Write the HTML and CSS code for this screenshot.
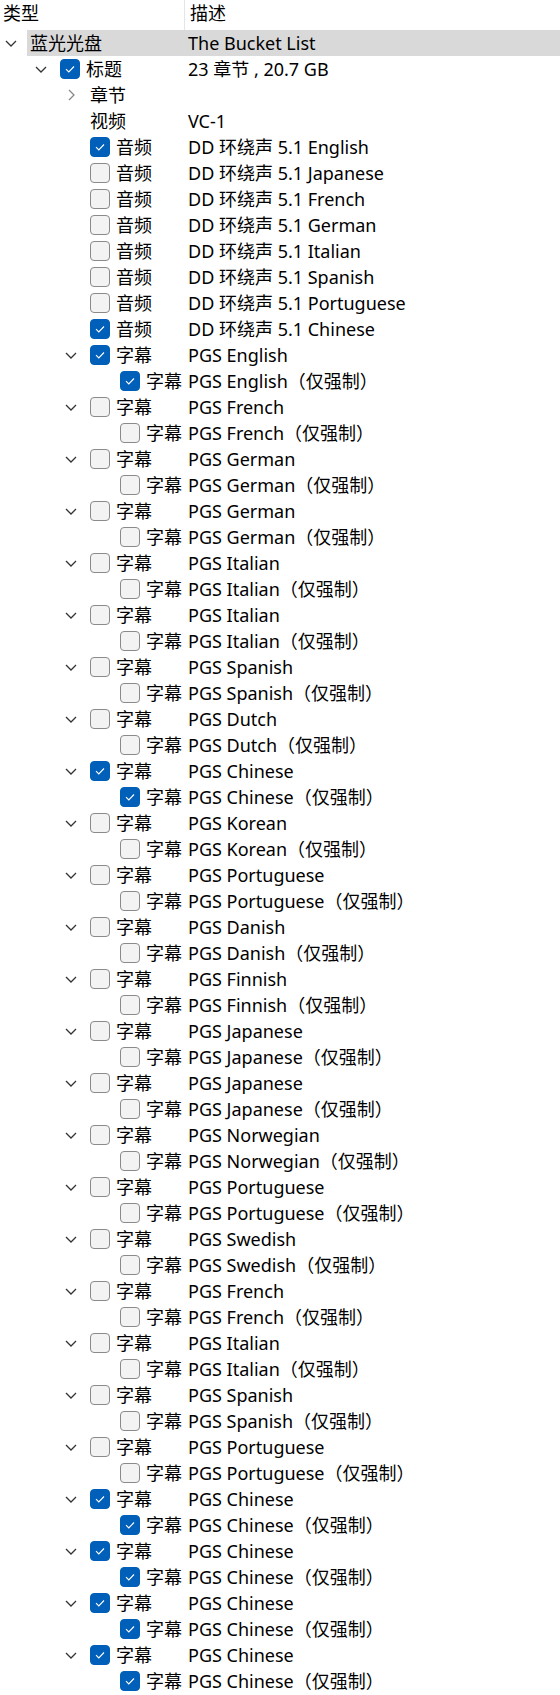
FILE: index.html
```html
<!DOCTYPE html>
<html lang="zh-CN">
<head>
<meta charset="utf-8">
<title>Tree</title>
<link rel="stylesheet" href="styles.css">
</head>
<body>
<div class="tree">
  <div class="head"><div class="hc1">类型</div><div class="hc2">描述</div></div>

  <div class="row sel"><div class="c1 l0"><span class="tw open"></span><span class="name">蓝光光盘</span></div><div class="desc">The Bucket List</div></div>
  <div class="row"><div class="c1 l1"><span class="tw open"></span><span class="cb on"></span><span class="name">标题</span></div><div class="desc">23 章节 , 20.7 GB</div></div>
  <div class="row"><div class="c1 l2"><span class="tw closed"></span><span class="name">章节</span></div><div class="desc"></div></div>
  <div class="row"><div class="c1 l2"><span class="tw"></span><span class="name">视频</span></div><div class="desc">VC-1</div></div>
  <div class="row"><div class="c1 l2"><span class="tw"></span><span class="cb on"></span><span class="name">音频</span></div><div class="desc">DD 环绕声 5.1 English</div></div>
  <div class="row"><div class="c1 l2"><span class="tw"></span><span class="cb"></span><span class="name">音频</span></div><div class="desc">DD 环绕声 5.1 Japanese</div></div>
  <div class="row"><div class="c1 l2"><span class="tw"></span><span class="cb"></span><span class="name">音频</span></div><div class="desc">DD 环绕声 5.1 French</div></div>
  <div class="row"><div class="c1 l2"><span class="tw"></span><span class="cb"></span><span class="name">音频</span></div><div class="desc">DD 环绕声 5.1 German</div></div>
  <div class="row"><div class="c1 l2"><span class="tw"></span><span class="cb"></span><span class="name">音频</span></div><div class="desc">DD 环绕声 5.1 Italian</div></div>
  <div class="row"><div class="c1 l2"><span class="tw"></span><span class="cb"></span><span class="name">音频</span></div><div class="desc">DD 环绕声 5.1 Spanish</div></div>
  <div class="row"><div class="c1 l2"><span class="tw"></span><span class="cb"></span><span class="name">音频</span></div><div class="desc">DD 环绕声 5.1 Portuguese</div></div>
  <div class="row"><div class="c1 l2"><span class="tw"></span><span class="cb on"></span><span class="name">音频</span></div><div class="desc">DD 环绕声 5.1 Chinese</div></div>

  <div class="row"><div class="c1 l2"><span class="tw open"></span><span class="cb on"></span><span class="name">字幕</span></div><div class="desc">PGS English</div></div>
  <div class="row"><div class="c1 l3"><span class="tw"></span><span class="cb on"></span><span class="name">字幕</span></div><div class="desc">PGS English（仅强制）</div></div>
  <div class="row"><div class="c1 l2"><span class="tw open"></span><span class="cb"></span><span class="name">字幕</span></div><div class="desc">PGS French</div></div>
  <div class="row"><div class="c1 l3"><span class="tw"></span><span class="cb"></span><span class="name">字幕</span></div><div class="desc">PGS French（仅强制）</div></div>
  <div class="row"><div class="c1 l2"><span class="tw open"></span><span class="cb"></span><span class="name">字幕</span></div><div class="desc">PGS German</div></div>
  <div class="row"><div class="c1 l3"><span class="tw"></span><span class="cb"></span><span class="name">字幕</span></div><div class="desc">PGS German（仅强制）</div></div>
  <div class="row"><div class="c1 l2"><span class="tw open"></span><span class="cb"></span><span class="name">字幕</span></div><div class="desc">PGS German</div></div>
  <div class="row"><div class="c1 l3"><span class="tw"></span><span class="cb"></span><span class="name">字幕</span></div><div class="desc">PGS German（仅强制）</div></div>
  <div class="row"><div class="c1 l2"><span class="tw open"></span><span class="cb"></span><span class="name">字幕</span></div><div class="desc">PGS Italian</div></div>
  <div class="row"><div class="c1 l3"><span class="tw"></span><span class="cb"></span><span class="name">字幕</span></div><div class="desc">PGS Italian（仅强制）</div></div>
  <div class="row"><div class="c1 l2"><span class="tw open"></span><span class="cb"></span><span class="name">字幕</span></div><div class="desc">PGS Italian</div></div>
  <div class="row"><div class="c1 l3"><span class="tw"></span><span class="cb"></span><span class="name">字幕</span></div><div class="desc">PGS Italian（仅强制）</div></div>
  <div class="row"><div class="c1 l2"><span class="tw open"></span><span class="cb"></span><span class="name">字幕</span></div><div class="desc">PGS Spanish</div></div>
  <div class="row"><div class="c1 l3"><span class="tw"></span><span class="cb"></span><span class="name">字幕</span></div><div class="desc">PGS Spanish（仅强制）</div></div>
  <div class="row"><div class="c1 l2"><span class="tw open"></span><span class="cb"></span><span class="name">字幕</span></div><div class="desc">PGS Dutch</div></div>
  <div class="row"><div class="c1 l3"><span class="tw"></span><span class="cb"></span><span class="name">字幕</span></div><div class="desc">PGS Dutch（仅强制）</div></div>
  <div class="row"><div class="c1 l2"><span class="tw open"></span><span class="cb on"></span><span class="name">字幕</span></div><div class="desc">PGS Chinese</div></div>
  <div class="row"><div class="c1 l3"><span class="tw"></span><span class="cb on"></span><span class="name">字幕</span></div><div class="desc">PGS Chinese（仅强制）</div></div>
  <div class="row"><div class="c1 l2"><span class="tw open"></span><span class="cb"></span><span class="name">字幕</span></div><div class="desc">PGS Korean</div></div>
  <div class="row"><div class="c1 l3"><span class="tw"></span><span class="cb"></span><span class="name">字幕</span></div><div class="desc">PGS Korean（仅强制）</div></div>
  <div class="row"><div class="c1 l2"><span class="tw open"></span><span class="cb"></span><span class="name">字幕</span></div><div class="desc">PGS Portuguese</div></div>
  <div class="row"><div class="c1 l3"><span class="tw"></span><span class="cb"></span><span class="name">字幕</span></div><div class="desc">PGS Portuguese（仅强制）</div></div>
  <div class="row"><div class="c1 l2"><span class="tw open"></span><span class="cb"></span><span class="name">字幕</span></div><div class="desc">PGS Danish</div></div>
  <div class="row"><div class="c1 l3"><span class="tw"></span><span class="cb"></span><span class="name">字幕</span></div><div class="desc">PGS Danish（仅强制）</div></div>
  <div class="row"><div class="c1 l2"><span class="tw open"></span><span class="cb"></span><span class="name">字幕</span></div><div class="desc">PGS Finnish</div></div>
  <div class="row"><div class="c1 l3"><span class="tw"></span><span class="cb"></span><span class="name">字幕</span></div><div class="desc">PGS Finnish（仅强制）</div></div>
  <div class="row"><div class="c1 l2"><span class="tw open"></span><span class="cb"></span><span class="name">字幕</span></div><div class="desc">PGS Japanese</div></div>
  <div class="row"><div class="c1 l3"><span class="tw"></span><span class="cb"></span><span class="name">字幕</span></div><div class="desc">PGS Japanese（仅强制）</div></div>
  <div class="row"><div class="c1 l2"><span class="tw open"></span><span class="cb"></span><span class="name">字幕</span></div><div class="desc">PGS Japanese</div></div>
  <div class="row"><div class="c1 l3"><span class="tw"></span><span class="cb"></span><span class="name">字幕</span></div><div class="desc">PGS Japanese（仅强制）</div></div>
  <div class="row"><div class="c1 l2"><span class="tw open"></span><span class="cb"></span><span class="name">字幕</span></div><div class="desc">PGS Norwegian</div></div>
  <div class="row"><div class="c1 l3"><span class="tw"></span><span class="cb"></span><span class="name">字幕</span></div><div class="desc">PGS Norwegian（仅强制）</div></div>
  <div class="row"><div class="c1 l2"><span class="tw open"></span><span class="cb"></span><span class="name">字幕</span></div><div class="desc">PGS Portuguese</div></div>
  <div class="row"><div class="c1 l3"><span class="tw"></span><span class="cb"></span><span class="name">字幕</span></div><div class="desc">PGS Portuguese（仅强制）</div></div>
  <div class="row"><div class="c1 l2"><span class="tw open"></span><span class="cb"></span><span class="name">字幕</span></div><div class="desc">PGS Swedish</div></div>
  <div class="row"><div class="c1 l3"><span class="tw"></span><span class="cb"></span><span class="name">字幕</span></div><div class="desc">PGS Swedish（仅强制）</div></div>
  <div class="row"><div class="c1 l2"><span class="tw open"></span><span class="cb"></span><span class="name">字幕</span></div><div class="desc">PGS French</div></div>
  <div class="row"><div class="c1 l3"><span class="tw"></span><span class="cb"></span><span class="name">字幕</span></div><div class="desc">PGS French（仅强制）</div></div>
  <div class="row"><div class="c1 l2"><span class="tw open"></span><span class="cb"></span><span class="name">字幕</span></div><div class="desc">PGS Italian</div></div>
  <div class="row"><div class="c1 l3"><span class="tw"></span><span class="cb"></span><span class="name">字幕</span></div><div class="desc">PGS Italian（仅强制）</div></div>
  <div class="row"><div class="c1 l2"><span class="tw open"></span><span class="cb"></span><span class="name">字幕</span></div><div class="desc">PGS Spanish</div></div>
  <div class="row"><div class="c1 l3"><span class="tw"></span><span class="cb"></span><span class="name">字幕</span></div><div class="desc">PGS Spanish（仅强制）</div></div>
  <div class="row"><div class="c1 l2"><span class="tw open"></span><span class="cb"></span><span class="name">字幕</span></div><div class="desc">PGS Portuguese</div></div>
  <div class="row"><div class="c1 l3"><span class="tw"></span><span class="cb"></span><span class="name">字幕</span></div><div class="desc">PGS Portuguese（仅强制）</div></div>
  <div class="row"><div class="c1 l2"><span class="tw open"></span><span class="cb on"></span><span class="name">字幕</span></div><div class="desc">PGS Chinese</div></div>
  <div class="row"><div class="c1 l3"><span class="tw"></span><span class="cb on"></span><span class="name">字幕</span></div><div class="desc">PGS Chinese（仅强制）</div></div>
  <div class="row"><div class="c1 l2"><span class="tw open"></span><span class="cb on"></span><span class="name">字幕</span></div><div class="desc">PGS Chinese</div></div>
  <div class="row"><div class="c1 l3"><span class="tw"></span><span class="cb on"></span><span class="name">字幕</span></div><div class="desc">PGS Chinese（仅强制）</div></div>
  <div class="row"><div class="c1 l2"><span class="tw open"></span><span class="cb on"></span><span class="name">字幕</span></div><div class="desc">PGS Chinese</div></div>
  <div class="row"><div class="c1 l3"><span class="tw"></span><span class="cb on"></span><span class="name">字幕</span></div><div class="desc">PGS Chinese（仅强制）</div></div>
  <div class="row"><div class="c1 l2"><span class="tw open"></span><span class="cb on"></span><span class="name">字幕</span></div><div class="desc">PGS Chinese</div></div>
  <div class="row"><div class="c1 l3"><span class="tw"></span><span class="cb on"></span><span class="name">字幕</span></div><div class="desc">PGS Chinese（仅强制）</div></div>
</div>
</body>
</html>
```
FILE: styles.css
```css
html, body {
  margin: 0;
  padding: 0;
  background: #ffffff;
}
body {
  font-family: "Noto Sans", "Noto Sans CJK SC", sans-serif;
  font-size: 18px;
  color: #000000;
}
.tree {
  width: 560px;
}
.head {
  display: grid;
  grid-template-columns: 184px 1fr;
  height: 30px;
}
.hc1 {
  padding-left: 3px;
  line-height: 26px;
}
.hc2 {
  border-left: 1px solid #e5e5e5;
  padding-left: 5px;
  line-height: 26px;
}
.row {
  display: grid;
  grid-template-columns: 184px 1fr;
  height: 26px;
  line-height: 26px;
  white-space: nowrap;
}
.row.sel {
  background: linear-gradient(to right, transparent 27px, #d9d9d9 27px);
}
.c1 {
  display: flex;
  align-items: center;
  overflow: hidden;
}
.l0 { padding-left: 0; }
.l1 { padding-left: 30px; }
.l2 { padding-left: 60px; }
.l3 { padding-left: 90px; }
.tw {
  flex: 0 0 30px;
  height: 26px;
  background-repeat: no-repeat;
}
.tw.open {
  background-image: url("data:image/svg+xml,%3Csvg xmlns='http://www.w3.org/2000/svg' width='12' height='7' viewBox='0 0 12 7'%3E%3Cpath d='M1 1 L6 6 L11 1' fill='none' stroke='%23333333' stroke-width='1.3'/%3E%3C/svg%3E");
  background-position: 5px 10px;
}
.tw.closed {
  background-image: url("data:image/svg+xml,%3Csvg xmlns='http://www.w3.org/2000/svg' width='7' height='12' viewBox='0 0 7 12'%3E%3Cpath d='M1 1 L6 6 L1 11' fill='none' stroke='%23888888' stroke-width='1.3'/%3E%3C/svg%3E");
  background-position: 8px 7px;
}
.cb {
  flex: 0 0 20px;
  width: 20px;
  height: 20px;
  box-sizing: border-box;
  border-radius: 4px;
  border: 1px solid #8a8a8a;
  background: #f3f3f3;
  margin-right: 6px;
}
.cb.on {
  border-color: #005fb8;
  background-color: #005fb8;
  background-image: url("data:image/svg+xml,%3Csvg xmlns='http://www.w3.org/2000/svg' width='18' height='18' viewBox='0 0 18 18'%3E%3Cpath d='M5 9.2 L7.8 12 L13 6.5' fill='none' stroke='%23ffffff' stroke-width='1.1'/%3E%3C/svg%3E");
  background-repeat: no-repeat;
  background-position: 0 0;
}
.name {
  display: block;
}
.desc {
  padding-left: 4px;
}
```
